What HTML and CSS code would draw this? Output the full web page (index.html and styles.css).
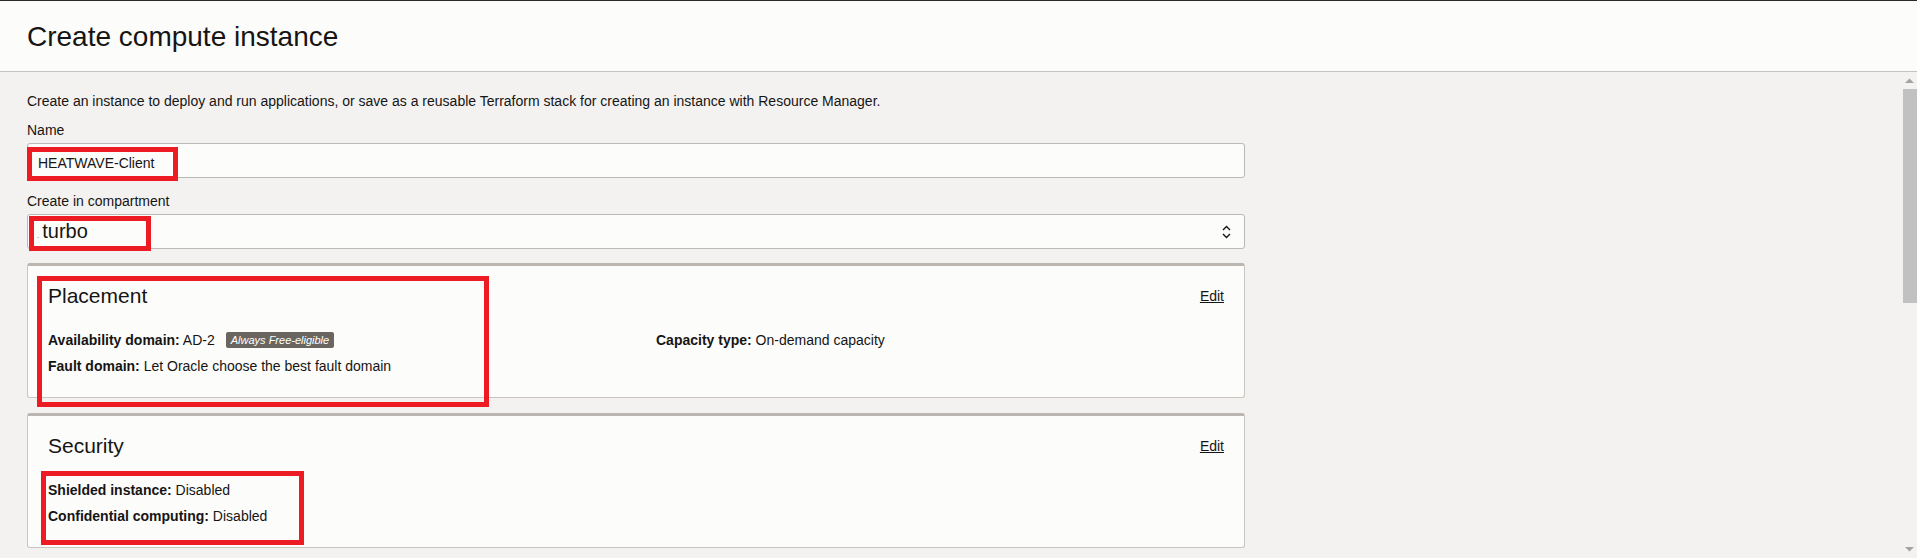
FILE: index.html
```html
<!DOCTYPE html>
<html lang="en">
<head>
<meta charset="utf-8">
<title>Create compute instance</title>
<link rel="stylesheet" href="styles.css">
</head>
<body>
<header class="page-header">
  <h1 class="page-title">Create compute instance</h1>
</header>
<main class="page-body">
  <div class="scroll-area">
    <div class="content">
      <p class="intro">Create an instance to deploy and run applications, or save as a reusable Terraform stack for creating an instance with Resource Manager.</p>

      <div class="field">
        <label class="field-label">Name</label>
        <div class="text-input">
          <span class="input-value">HEATWAVE-Client</span>
          <span class="callout callout-name"></span>
        </div>
      </div>

      <div class="field field-compartment">
        <label class="field-label">Create in compartment</label>
        <div class="select-input">
          <span class="select-value"><span class="speck">.</span>turbo</span>
          <svg class="select-chevron" width="9" height="14" viewBox="0 0 9 14" aria-hidden="true">
            <path d="M1 5 L4.5 1.5 L8 5" fill="none" stroke="#161513" stroke-width="1.4"/>
            <path d="M1 9 L4.5 12.5 L8 9" fill="none" stroke="#161513" stroke-width="1.4"/>
          </svg>
          <span class="callout callout-compartment"></span>
        </div>
      </div>

      <section class="card card-placement">
        <div class="card-head">
          <h2 class="card-title">Placement</h2>
          <a class="card-edit" href="#">Edit</a>
        </div>
        <div class="card-grid">
          <div class="prop"><b>Availability domain:</b> AD-2<span class="badge">Always Free-eligible</span></div>
          <div class="prop"><b>Capacity type:</b> On-demand capacity</div>
          <div class="prop"><b>Fault domain:</b> Let Oracle choose the best fault domain</div>
        </div>
        <span class="callout callout-placement"></span>
      </section>

      <section class="card card-security">
        <div class="card-head">
          <h2 class="card-title">Security</h2>
          <a class="card-edit" href="#">Edit</a>
        </div>
        <div class="card-grid">
          <div class="prop"><b>Shielded instance:</b> Disabled</div>
          <div class="prop"><b>Confidential computing:</b> Disabled</div>
        </div>
        <span class="callout callout-security"></span>
      </section>
    </div>
  </div>
  <div class="scrollbar" aria-hidden="true">
    <span class="scroll-arrow">
      <svg width="9" height="5" viewBox="0 0 9 5"><path d="M0 5 L4.5 0.5 L9 5 Z" fill="#a3a3a3"/></svg>
    </span>
    <span class="scroll-thumb"></span>
    <span class="scroll-track"></span>
    <span class="scroll-arrow">
      <svg width="9" height="5" viewBox="0 0 9 5"><path d="M0 0 L4.5 4.5 L9 0 Z" fill="#a3a3a3"/></svg>
    </span>
  </div>
</main>
</body>
</html>
```

FILE: styles.css
```css
html, body {
  margin: 0;
  padding: 0;
  height: 100%;
  overflow: hidden;
}

body {
  font-family: "Liberation Sans", Arial, sans-serif;
  color: #161513;
  background: #f3f2f1;
  display: flex;
  flex-direction: column;
}

.page-header {
  flex: none;
  background: #fcfcfb;
  border-top: 1px solid #2b2927;
  border-bottom: 1px solid #c6c2bd;
  padding: 21px 27px 19px;
}

.page-title {
  margin: 0;
  font-size: 28px;
  line-height: 30px;
  font-weight: normal;
  color: #161513;
}

.page-body {
  flex: 1;
  min-height: 0;
  display: flex;
  overflow: hidden;
  background: #f3f2f1;
}

.scroll-area {
  flex: 1;
  min-width: 0;
  overflow: hidden;
}

.scrollbar {
  flex: none;
  width: 17px;
  display: flex;
  flex-direction: column;
  background: #f3f2f1;
}

.scroll-arrow {
  flex: none;
  height: 17px;
  display: flex;
  align-items: center;
  justify-content: center;
  padding-left: 1px;
}

.scroll-arrow svg {
  display: block;
}

.scroll-thumb {
  flex: none;
  height: 214px;
  margin-left: 3px;
  background: #c1c1c1;
}

.scroll-track {
  flex: 1;
}

.content {
  width: 1218px;
  margin-left: 27px;
  padding-top: 21px;
}

.intro {
  margin: 0 0 13px;
  font-size: 14px;
  line-height: 16px;
}

.field {
  display: flex;
  flex-direction: column;
  gap: 5px;
}

.field-compartment {
  margin-top: 15px;
}

.field-label {
  font-size: 14px;
  line-height: 16px;
}

.text-input,
.select-input {
  position: relative;
  box-sizing: border-box;
  height: 35px;
  background: #fcfcfb;
  border: 1px solid #bcb8b3;
  border-radius: 3px;
  display: flex;
  align-items: center;
}

.input-value {
  padding-left: 10px;
  font-size: 14px;
  line-height: 16px;
  padding-top: 4px;
}

.select-input {
  justify-content: space-between;
  padding-right: 13px;
}

.select-value {
  padding-left: 9px;
  font-size: 20px;
  line-height: 22px;
  padding-top: 3px;
}

.speck {
  font-size: 8px;
  color: #555;
  margin-right: 3px;
}

.select-chevron {
  display: block;
}

.card {
  position: relative;
  margin-top: 14px;
  background: #fcfcfb;
  border: 1px solid #c9c5c0;
  border-top: 3px solid #bcb6b0;
  border-radius: 3px;
  padding: 18px 20px;
}

.card-security {
  margin-top: 15px;
}

.card-head {
  display: flex;
  align-items: center;
  justify-content: space-between;
  margin-bottom: 19px;
}

.card-title {
  margin: 0;
  font-size: 21px;
  line-height: 24px;
  font-weight: normal;
}

.card-edit {
  font-size: 14px;
  line-height: 16px;
  color: #161513;
  text-decoration: underline;
}

.card-grid {
  display: grid;
  grid-template-columns: 1fr 1fr;
  column-gap: 40px;
}

.card-security .card-grid {
  grid-template-columns: 1fr;
}

.prop {
  font-size: 14px;
  line-height: 26px;
}

.prop b {
  font-weight: bold;
}

.badge {
  display: inline-block;
  vertical-align: middle;
  margin-left: 11px;
  margin-top: -3px;
  padding: 0 5px;
  height: 16px;
  line-height: 16px;
  font-size: 11px;
  font-style: italic;
  color: #ffffff;
  background: #6b6560;
  border-radius: 2px;
}

.callout {
  position: absolute;
  box-sizing: border-box;
  border: 5px solid #ed1c24;
  pointer-events: none;
}

.callout-name {
  left: -1px;
  top: 3px;
  width: 151px;
  height: 34px;
}

.callout-compartment {
  left: 1px;
  top: 1px;
  width: 122px;
  height: 35px;
}

.callout-placement {
  left: 9px;
  top: 10px;
  width: 452px;
  height: 131px;
}

.callout-security {
  left: 13px;
  top: 55px;
  width: 263px;
  height: 74px;
}
```
